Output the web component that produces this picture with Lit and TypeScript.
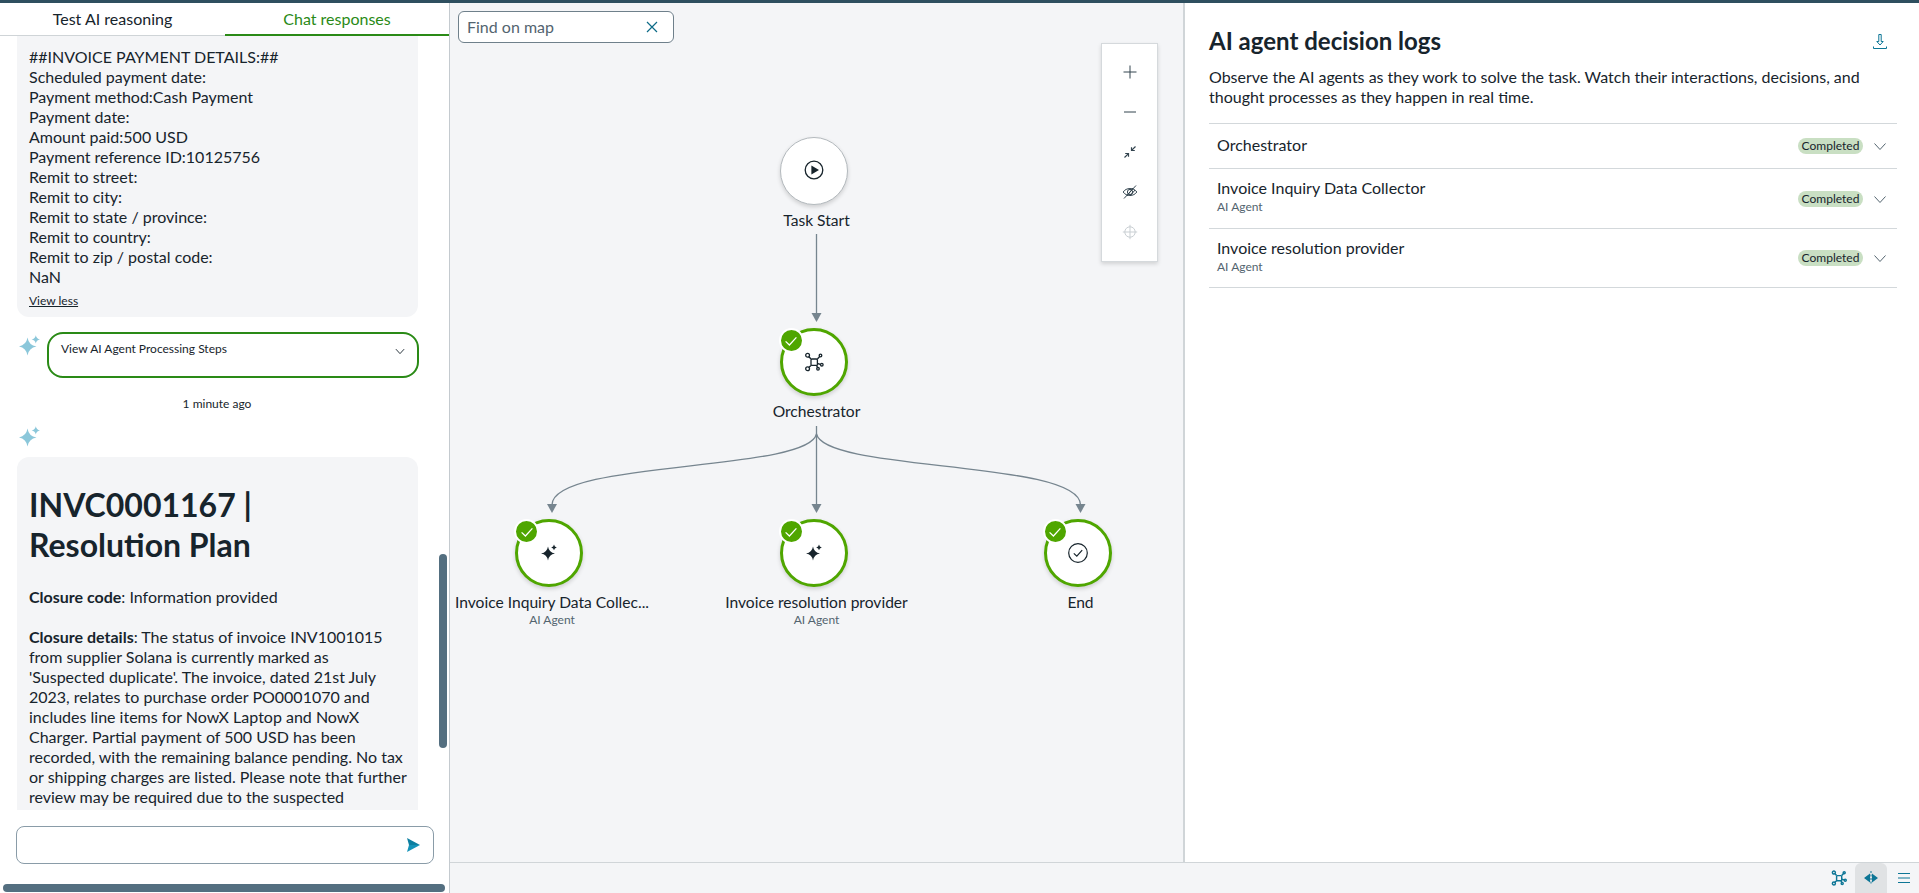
import { LitElement, html, css, svg } from "lit"
import { customElement } from "lit/decorators.js"

// four point star with concave sides, used for the AI sparkles
const star = (cx: number, cy: number, r: number) => {
    const k = r * 0.14
    return `M${cx} ${cy - r}Q${cx + k} ${cy - k} ${cx + r} ${cy}Q${cx + k} ${cy + k} ${cx} ${cy + r}Q${cx - k} ${cy + k} ${cx - r} ${cy}Q${cx - k} ${cy - k} ${cx} ${cy - r}Z`
}

const sparkle = (cls: string) => html`
    <svg class=${cls} viewBox="0 0 21 21">
        <path d=${star(8.5, 11.5, 9)}></path>
        <path d=${star(16.8, 4.4, 4.2)}></path>
    </svg>`

const network = (cls: string) => html`
    <svg class=${cls} viewBox="0 0 20 20" fill="none" stroke="currentColor" stroke-width="1.3">
        <rect x="7" y="7" width="6.4" height="6.4" rx="1"></rect>
        <path d="M7 7 4.7 4.5M13.4 7l2.3-2.5M13.4 11.5l3 .8M12.5 13.4l1 2M7 13.4l-2.3 2"></path>
        <circle cx="3.6" cy="3.2" r="1.9"></circle>
        <circle cx="16.5" cy="3.5" r="1.3"></circle>
        <circle cx="17.8" cy="12.7" r="1.3"></circle>
        <circle cx="14" cy="16.8" r="1.3"></circle>
        <circle cx="3.6" cy="16.8" r="1.9"></circle>
    </svg>`

const chevron = (cls: string) => html`
    <svg class=${cls} viewBox="0 0 16 16" fill="none" stroke="currentColor" stroke-width="1"><path d="M2.5 5.5 8 11.5l5.5-6"></path></svg>`

const check = html`
    <svg viewBox="0 0 20 20" width="20" height="20" fill="none" stroke="#fff" stroke-width="1.3"><path d="M4.6 10.4 8.4 14l7-7.6"></path></svg>`

const nodeIcons: Record<string, unknown> = {
    play: html`<svg class="ico up" viewBox="0 0 20 20"><circle cx="10" cy="10" r="8.8" fill="none" stroke="#17242c" stroke-width="1.3"></circle><path d="M7.4 5.6 15 10l-7.6 4.4Z" fill="#17242c"></path></svg>`,
    network: network("ico"),
    spark: html`<svg class="ico" viewBox="0 0 20 20" fill="#17242c"><path d=${star(9, 10.5, 7)}></path><path d=${star(15, 4.4, 2.8)}></path></svg>`,
    done: html`<svg class="ico" viewBox="0 0 20 20" fill="none" stroke="#17242c" stroke-width="1.2"><circle cx="10" cy="10" r="9.3"></circle><path d="M5.8 10.4 8.8 13.2 14.2 7.2"></path></svg>`,
}

const nodes = [
    { x: 366.5, y: 134, label: "Task Start", icon: "play" },
    { x: 366.5, y: 325, label: "Orchestrator", icon: "network", ok: true },
    { x: 102, y: 516, label: "Invoice Inquiry Data Collec...", sub: "AI Agent", icon: "spark", ok: true },
    { x: 366.5, y: 516, label: "Invoice resolution provider", sub: "AI Agent", icon: "spark", ok: true },
    { x: 630.5, y: 516, label: "End", icon: "done", ok: true },
]

const arrow = (x: number, y: number) => svg`<path d="M${x - 5} ${y - 9}h10l-5 9Z" fill="#76858f" stroke="none"></path>`

const paymentLines = [
    "##INVOICE PAYMENT DETAILS:##",
    "Scheduled payment date:",
    "Payment method:Cash Payment",
    "Payment date:",
    "Amount paid:500 USD",
    "Payment reference ID:10125756",
    "Remit to street:",
    "Remit to city:",
    "Remit to state / province:",
    "Remit to country:",
    "Remit to zip / postal code:",
    "NaN",
]

const logs = [
    { name: "Orchestrator", kind: "short" },
    { name: "Invoice Inquiry Data Collector", sub: "AI Agent", kind: "" },
    { name: "Invoice resolution provider", sub: "AI Agent", kind: "last" },
]

@customElement("app-root")
export class AppRoot extends LitElement {
    static styles = css`
        :host {
            display: flex;
            flex-direction: column;
            height: 100vh;
            font-family: Lato, "Open Sans", sans-serif;
            font-size: 16px;
            line-height: 20px;
            color: #17242c;
            background: #fff;
            overflow: hidden;
        }
        .topbar { height: 3px; flex: none; background: #2e4f5f; }
        .main { flex: 1; min-height: 0; display: grid; grid-template-columns: 450px 1fr; }

        .left {
            position: relative;
            display: flex;
            flex-direction: column;
            min-height: 0;
            border-right: 1px solid #c4cacf;
        }
        .tabs { flex: none; display: grid; grid-template-columns: 225px 224px; height: 33px; }
        .tab { display: flex; align-items: center; justify-content: center; border-bottom: 1px solid #cfd4d7; }
        .tab.active { color: #2a8a16; border-bottom: 2px solid #2a8a16; }

        .chat { flex: none; height: 774px; overflow: hidden; padding: 0 31px 0 17px; }
        .bubble { background: #f4f5f7; border-radius: 12px; padding: 0 10px 0 12px; }
        .first { border-radius: 0 0 12px 12px; padding-top: 11px; padding-bottom: 8px; }
        .less { display: block; margin-top: 6px; font-size: 12px; line-height: 16px; text-decoration: underline; }
        .steps { display: flex; margin-top: 15px; width: 402px; }
        .spark { width: 21px; height: 21px; fill: #8bc7da; flex: none; display: block; }
        .steps .spark { margin: 3px 7px 0 2px; }
        .stepsbox {
            box-sizing: border-box;
            width: 372px;
            height: 46px;
            border: 2px solid #2a8a16;
            border-radius: 16px;
            padding: 7px 12px 0;
            display: flex;
            justify-content: space-between;
            font-size: 12px;
            line-height: 16px;
        }
        .stepsbox svg { width: 12px; height: 12px; margin: 4px -1px 0 0; stroke-width: 1.2; }
        .ago { margin-top: 18px; text-align: center; font-size: 12px; line-height: 16px; padding-right: 1px; }
        .spark.solo { margin: 14px 0 10px 2px; }
        .plan { padding-top: 28px; height: 340px; border-radius: 12px 12px 0 0; }
        .plan h1 { margin: 0 0 22px; font-size: 32px; line-height: 40px; font-weight: 700; }
        .plan p { margin: 0 0 20px; }
        b { font-weight: 700; }

        .input {
            box-sizing: border-box;
            margin: 16px 0 0 16px;
            width: 418px;
            height: 38px;
            border: 1px solid #8a9ca8;
            border-radius: 8px;
            display: flex;
            align-items: center;
            justify-content: flex-end;
            padding-right: 13px;
        }
        .input svg { width: 13px; height: 14px; }
        .vbar, .hbar { position: absolute; background: #546f80; border-radius: 4px; }
        .vbar { left: 439px; top: 551px; width: 8px; height: 194px; }
        .hbar { left: 3px; top: 881px; width: 442px; height: 8px; }

        .work { display: grid; grid-template-rows: 1fr 31px; min-height: 0; min-width: 0; }
        .panes { display: grid; grid-template-columns: 735px 1fr; min-height: 0; }
        .canvas { position: relative; background: #f4f5f7; border-right: 2px solid #d0d5d8; overflow: hidden; }
        .edges { position: absolute; inset: 0; width: 100%; height: 100%; }
        .find {
            position: absolute;
            left: 8px;
            top: 8px;
            box-sizing: border-box;
            width: 216px;
            height: 32px;
            border: 1px solid #6f808b;
            border-radius: 6px;
            background: #fff;
            color: #53646f;
            display: flex;
            align-items: center;
            justify-content: space-between;
            padding: 0 15px 0 8px;
        }
        .find svg { width: 12px; height: 12px; }
        .tools {
            position: absolute;
            left: 651px;
            top: 40px;
            width: 57px;
            box-sizing: border-box;
            padding: 8px 0 9px;
            background: #fff;
            border: 1px solid #d5d9dc;
            box-shadow: 0 2px 4px rgba(0, 0, 0, 0.14);
            display: flex;
            flex-direction: column;
        }
        .tool { height: 40px; display: flex; align-items: center; justify-content: center; color: #33444f; }
        .tool svg { width: 16px; height: 16px; }
        .tool.off { color: #c9cfd3; }

        .node {
            position: absolute;
            width: 220px;
            margin-left: -110px;
            display: flex;
            flex-direction: column;
            align-items: center;
            white-space: nowrap;
        }
        .circle {
            position: relative;
            box-sizing: border-box;
            width: 68px;
            height: 68px;
            margin-right: 6px;
            border-radius: 50%;
            background: #fff;
            border: 1px solid #b4babe;
            box-shadow: 0 2px 4px rgba(0, 0, 0, 0.16);
            display: flex;
            align-items: center;
            justify-content: center;
        }
        .circle.ok { border: 3px solid #4fa600; }
        .ico { width: 20px; height: 20px; color: #17242c; }
        .ico.up { margin-top: -2px; }
        .badge {
            position: absolute;
            left: -4px;
            top: -3px;
            box-sizing: border-box;
            width: 25px;
            height: 25px;
            border: 2px solid #fff;
            border-radius: 50%;
            background: #4fa600;
            display: flex;
            align-items: center;
            justify-content: center;
        }
        .label { margin-top: 5px; font-size: 15.6px; }
        .sub { font-size: 12px; line-height: 16px; color: #53646f; }

        .logs { padding: 22px 22px 0 24px; min-width: 0; }
        .head { display: flex; justify-content: space-between; align-items: center; padding-right: 10px; }
        .head h2 { margin: 0; font-size: 24px; line-height: 32px; font-weight: 700; }
        .head svg { width: 14px; height: 15px; color: #0d7696; }
        .intro { margin: 10px 0 16px; }
        .rows { border-top: 1px solid #d3d8db; }
        .row {
            display: flex;
            align-items: center;
            justify-content: space-between;
            box-sizing: border-box;
            height: 60px;
            padding: 0 9px 0 8px;
            border-bottom: 1px solid #d3d8db;
        }
        .row.short { height: 45px; }
        .row.last { height: 59px; }
        .name { margin-bottom: 4px; }
        .row.short .name { margin-bottom: 2px; }
        .name .sub { margin-top: 1px; }
        .status { display: flex; align-items: center; gap: 9px; }
        .pill { width: 65px; text-align: center; font-size: 12px; line-height: 16px; background: #c9dfc3; border-radius: 8px; }
        .status svg { width: 16px; height: 16px; color: #53646f; }

        .foot {
            display: flex;
            justify-content: flex-end;
            align-items: stretch;
            background: #f4f5f7;
            border-top: 1px solid #d0d5d8;
            color: #0d7696;
        }
        .view { width: 32px; display: flex; align-items: center; justify-content: center; }
        .view.on { background: #e0e2e4; border-radius: 6px 6px 0 0; }
        .view svg { width: 16px; height: 16px; stroke-width: 1.8; }
        .view svg.list { width: 12px; height: 12px; margin-left: 2px; stroke-width: 1.2; }
    `

    renderEdges() {
        return html`
            <svg class="edges" fill="none" stroke="#76858f" stroke-width="1.3">
                <path d="M366.5 231V311"></path>
                ${arrow(366.5, 319)}
                <path d="M366.5 423V502"></path>
                <path d="M366.5 431C358 469 102 457 102 502"></path>
                <path d="M366.5 431C375 469 630.5 457 630.5 502"></path>
                ${arrow(102, 510)}
                ${arrow(366.5, 510)}
                ${arrow(630.5, 510)}
            </svg>`
    }

    renderTools() {
        return html`
            <div class="tools">
                <div class="tool"><svg viewBox="0 0 16 16" fill="none" stroke="currentColor"><path d="M8 1.5v13M1.5 8h13"></path></svg></div>
                <div class="tool"><svg viewBox="0 0 16 16" fill="none" stroke="currentColor"><path d="M2 8h12"></path></svg></div>
                <div class="tool"><svg viewBox="0 0 16 16" fill="none" stroke="currentColor" stroke-width="1.2"><path d="M13.500 2.500 9.800 6.200M9.500 3.200v3.300h3.300M2.500 13.500l3.700-3.700M3.200 9.500h3.300v3.300"></path></svg></div>
                <div class="tool"><svg viewBox="0 0 16 16" fill="none" stroke="currentColor"><path d="M1.200 8C4 3.400 12 3.400 14.800 8 12 12.600 4 12.600 1.200 8Z"></path><circle cx="8" cy="8" r="2.600"></circle><path d="M14 1.500 2 14.500M11 4l-6 8M13 6l-5 6"></path></svg></div>
                <div class="tool off"><svg viewBox="0 0 16 16" fill="none" stroke="currentColor"><circle cx="8" cy="8" r="5.200"></circle><path d="M8 .8v14.400M.8 8h14.400"></path></svg></div>
            </div>`
    }

    render() {
        return html`
            <div class="topbar"></div>
            <div class="main">
                <section class="left">
                    <div class="tabs">
                        <div class="tab">Test AI reasoning</div>
                        <div class="tab active">Chat responses</div>
                    </div>
                    <div class="chat">
                        <div class="bubble first">
                            ${paymentLines.map(l => html`<div>${l}</div>`)}
                            <a class="less">View less</a>
                        </div>
                        <div class="steps">
                            ${sparkle("spark")}
                            <div class="stepsbox">View AI Agent Processing Steps ${chevron("")}</div>
                        </div>
                        <div class="ago">1 minute ago</div>
                        ${sparkle("spark solo")}
                        <div class="bubble plan">
                            <h1>INVC0001167 | Resolution Plan</h1>
                            <p><b>Closure code</b>: Information provided</p>
                            <p><b>Closure details</b>: The status of invoice INV1001015 from supplier Solana is currently marked as 'Suspected duplicate'. The invoice, dated 21st July 2023, relates to purchase order PO0001070 and includes line items for NowX Laptop and NowX Charger. Partial payment of 500 USD has been recorded, with the remaining balance pending. No tax or shipping charges are listed. Please note that further review may be required due to the suspected</p>
                        </div>
                    </div>
                    <div class="input">
                        <svg viewBox="0 0 13 14"><path d="M0 0 13 7 2 7Z" fill="#0d7fa1"></path><path d="M0 14 13 7 2 7Z" fill="#1593b8"></path></svg>
                    </div>
                    <div class="vbar"></div>
                    <div class="hbar"></div>
                </section>
                <div class="work">
                    <div class="panes">
                        <div class="canvas">
                            ${this.renderEdges()}
                            <div class="find">Find on map
                                <svg viewBox="0 0 12 12" fill="none" stroke="#0d6a87" stroke-width="1.2"><path d="M1 1l10 10M11 1 1 11"></path></svg>
                            </div>
                            ${this.renderTools()}
                            ${nodes.map(n => html`
                                <div class="node" style="left:${n.x}px;top:${n.y}px">
                                    <div class="circle ${n.ok ? "ok" : ""}">
                                        ${nodeIcons[n.icon]}
                                        ${n.ok ? html`<span class="badge">${check}</span>` : ""}
                                    </div>
                                    <div class="label">${n.label}</div>
                                    ${n.sub ? html`<div class="sub">${n.sub}</div>` : ""}
                                </div>`)}
                        </div>
                        <section class="logs">
                            <div class="head">
                                <h2>AI agent decision logs</h2>
                                <svg viewBox="0 0 14 15" fill="none" stroke="currentColor"><path d="M5.800 .5h2.400v7h2L7 11 3.800 7.500h2ZM.5 12.500v2h13v-2" stroke-width="1"></path></svg>
                            </div>
                            <div class="intro">Observe the AI agents as they work to solve the task. Watch their interactions, decisions, and thought processes as they happen in real time.</div>
                            <div class="rows">
                                ${logs.map(r => html`
                                    <div class="row ${r.kind}">
                                        <div class="name">
                                            <div>${r.name}</div>
                                            ${r.sub ? html`<div class="sub">${r.sub}</div>` : ""}
                                        </div>
                                        <div class="status">
                                            <span class="pill">Completed</span>
                                            ${chevron("")}
                                        </div>
                                    </div>`)}
                            </div>
                        </section>
                    </div>
                    <div class="foot">
                        <div class="view">${network("")}</div>
                        <div class="view on">
                            <svg viewBox="0 0 16 16" fill="currentColor" stroke="none"><path d="M7 3.500v9L1 8ZM9 3.500v9L15 8Z"></path><path d="M8 1v14" stroke="currentColor" stroke-width="1" stroke-dasharray="2 1.500"></path></svg>
                        </div>
                        <div class="view">
                            <svg class="list" viewBox="0 0 12 12" fill="none" stroke="currentColor"><path d="M0 1.500h12M0 6h12M0 10.500h12"></path></svg>
                        </div>
                    </div>
                </div>
            </div>
        `
    }
}
